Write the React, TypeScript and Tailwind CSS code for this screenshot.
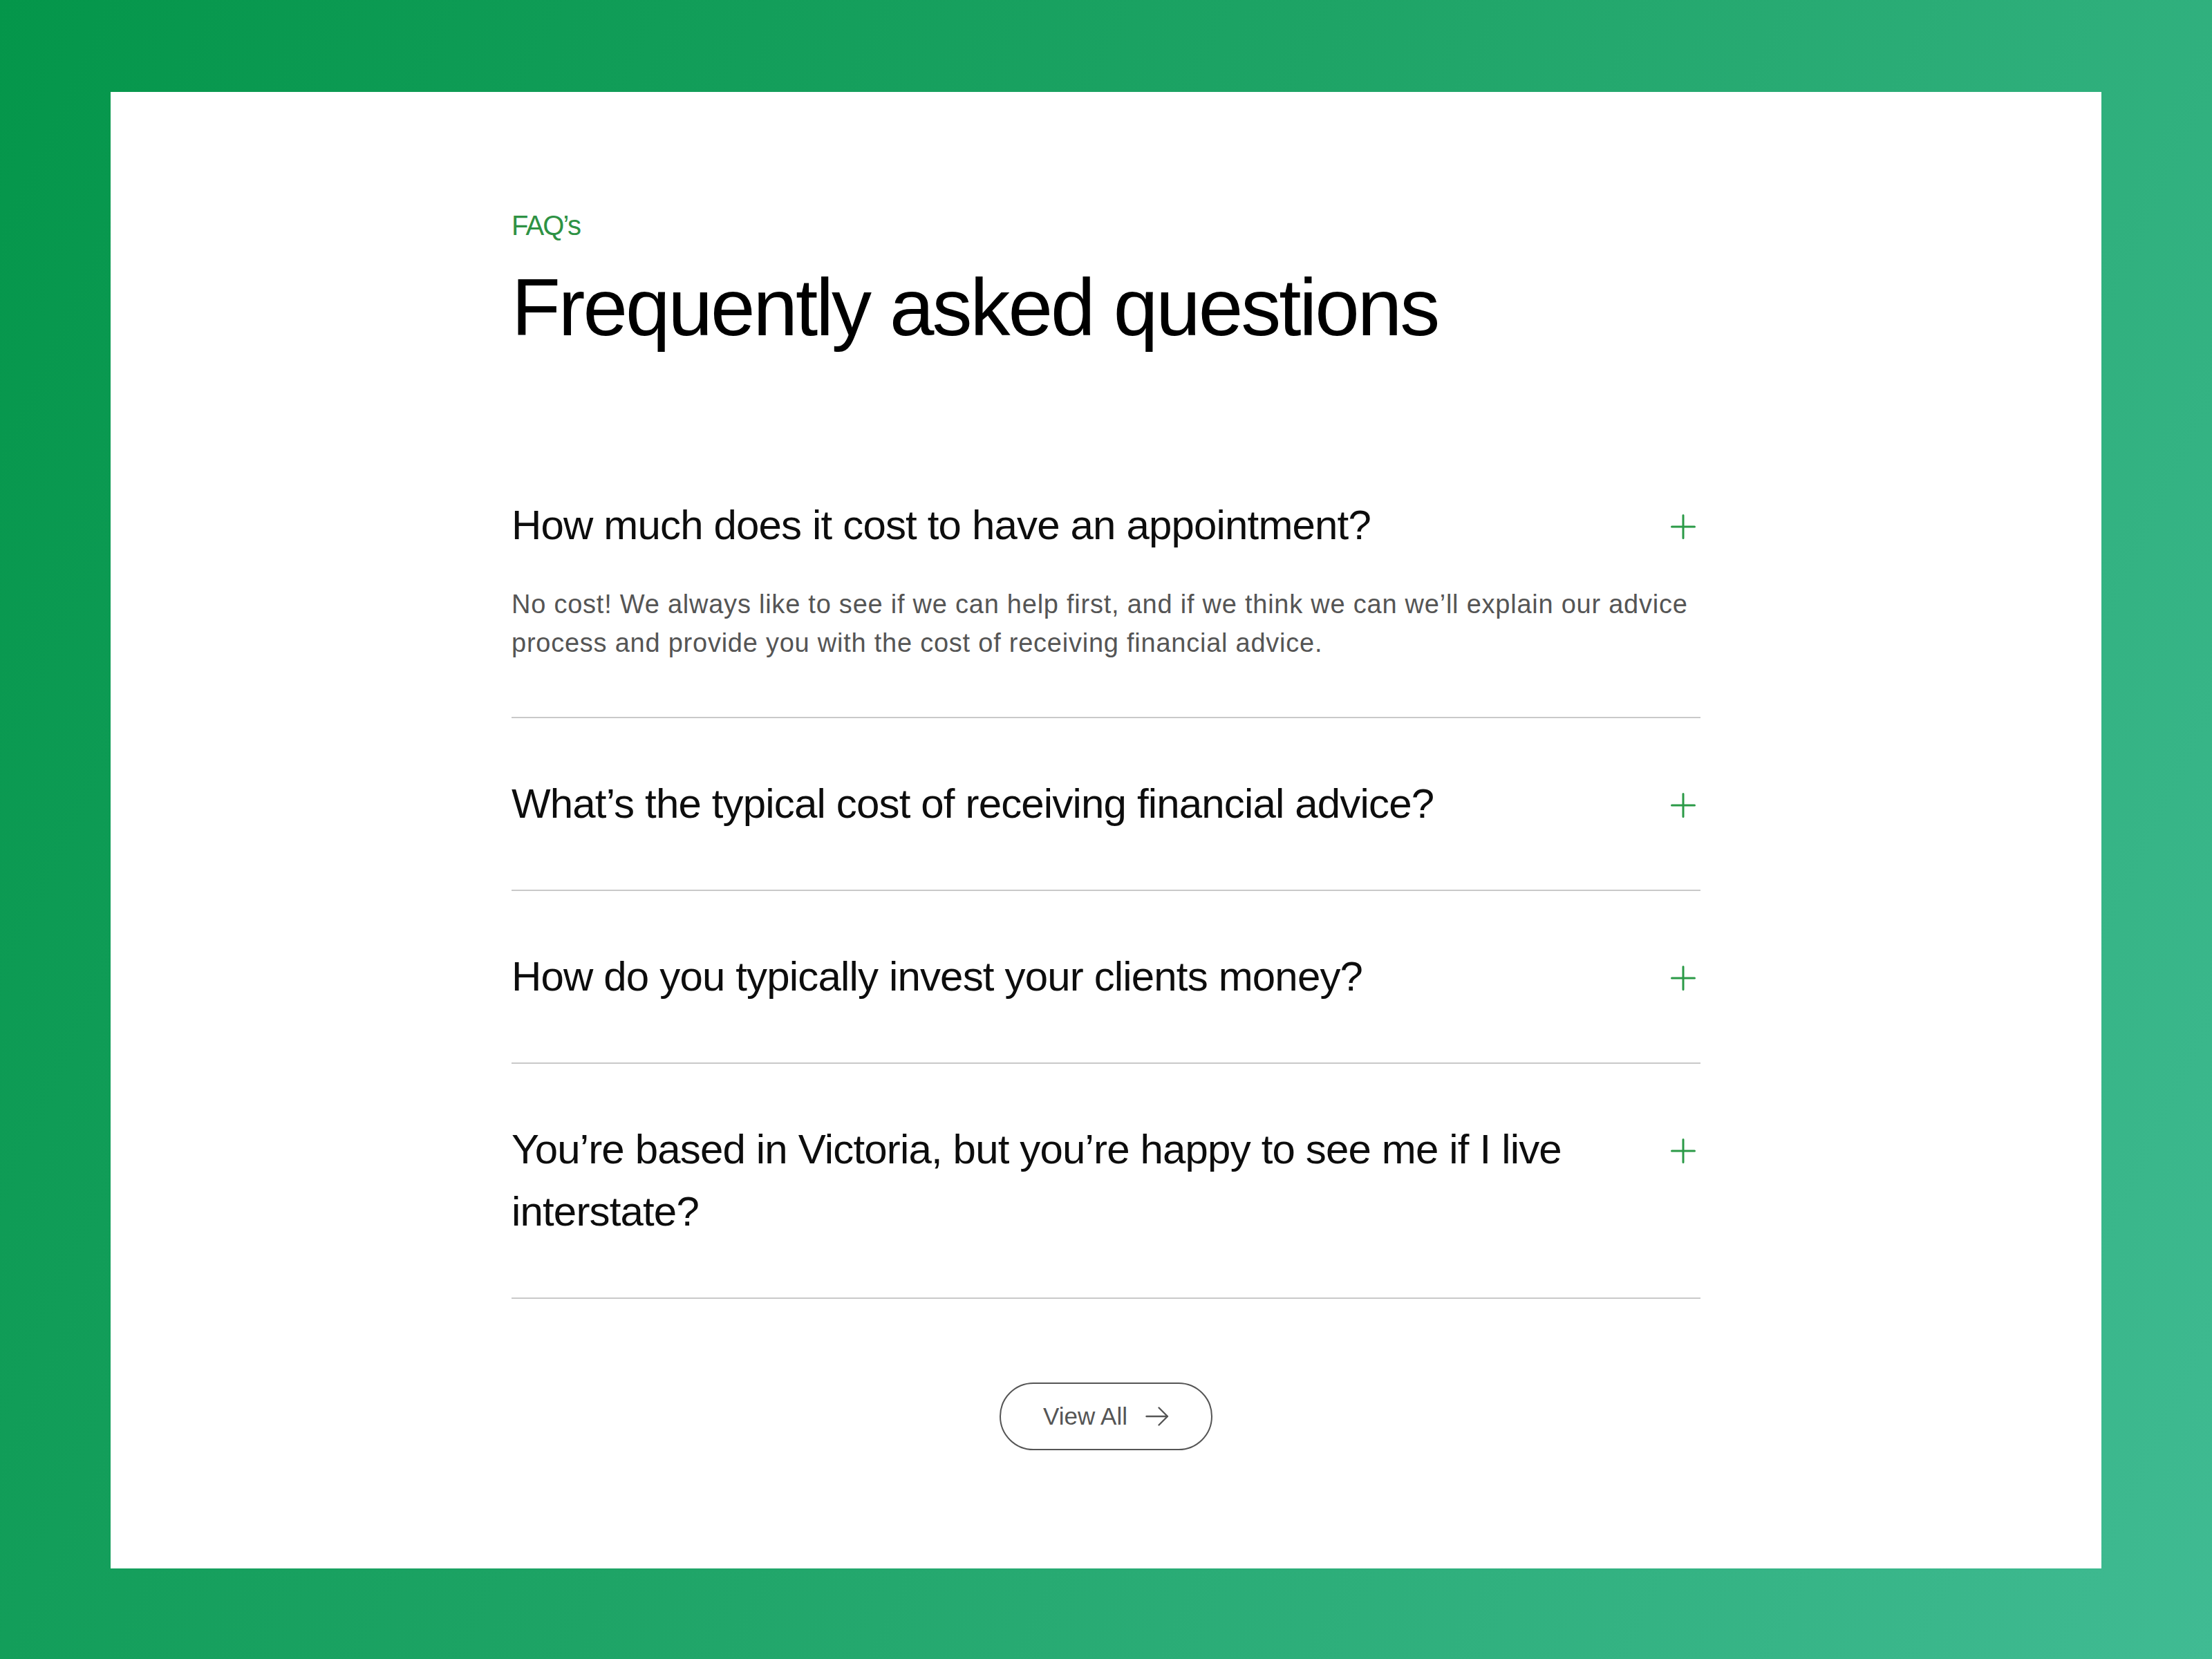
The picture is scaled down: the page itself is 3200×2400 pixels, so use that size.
import React from "react";

const faqs = [
  {
    q: "How much does it cost to have an appointment?",
    a: "No cost! We always like to see if we can help first, and if we think we can we\u2019ll explain our advice process and provide you with the cost of receiving financial advice.",
  },
  { q: "What\u2019s the typical cost of receiving financial advice?" },
  { q: "How do you typically invest your clients money?" },
  { q: "You\u2019re based in Victoria, but you\u2019re happy to see me if I live interstate?" },
];

function PlusIcon() {
  return (
    <svg width="36" height="36" viewBox="0 0 36 36" fill="none" stroke="#2b9a47" strokeWidth="3" strokeLinecap="round">
      <path d="M18 1.5V34.5M1.5 18H34.5" />
    </svg>
  );
}

function ArrowIcon() {
  return (
    <svg width="34" height="30" viewBox="0 0 34 30" fill="none" stroke="#555555" strokeWidth="2.4" strokeLinecap="round" strokeLinejoin="round">
      <path d="M1.5 15H32M19.5 2.5L32 15L19.5 27.5" />
    </svg>
  );
}

export default function App() {
  return (
    <div
      className="min-h-screen w-full bg-[linear-gradient(115deg,#04964a_0%,#1ea466_45%,#40bb93_100%)] px-[160px] pt-[133px] pb-[131px]"
      style={{ fontFamily: '"Liberation Sans", Arial, sans-serif' }}
    >
      <div className="bg-white pt-[163px] pb-[171px]">
        <div className="mx-auto w-[1720px]">
          <div className="text-[40px] leading-[60px] text-[#2e9244] tracking-[-0.045em]">FAQ&rsquo;s</div>
          <h1 className="mt-[20px] text-[116px] leading-[138px] font-normal text-black tracking-[-0.026em]">
            Frequently asked questions
          </h1>

          <div className="mt-[201px] flex flex-col">
            {faqs.map((f, i) => (
              <div
                key={i}
                className={`border-b-2 border-[#c9c9c9] ${i === 0 ? "pt-0 pb-[79px]" : "py-[79px]"}`}
              >
                <div className="flex items-start justify-between">
                  <div className="max-w-[1560px] text-[60px] leading-[90px] text-[#0d0d0d] tracking-[-0.014em]">
                    {f.q}
                  </div>
                  <div className="flex h-[90px] items-center pr-[7px] pt-[3px]">
                    <PlusIcon />
                  </div>
                </div>
                {f.a && (
                  <p className="mt-[41px] text-[38px] leading-[56px] text-[#555555] tracking-[0.02em]">
                    {f.a}
                  </p>
                )}
              </div>
            ))}
          </div>

          <div className="mt-[121px] flex justify-center">
            <button className="flex h-[98px] w-[308px] items-center justify-center gap-[26px] rounded-full border-2 border-[#555555] text-[35px] text-[#555555]">
              <span>View All</span>
              <ArrowIcon />
            </button>
          </div>
        </div>
      </div>
    </div>
  );
}
